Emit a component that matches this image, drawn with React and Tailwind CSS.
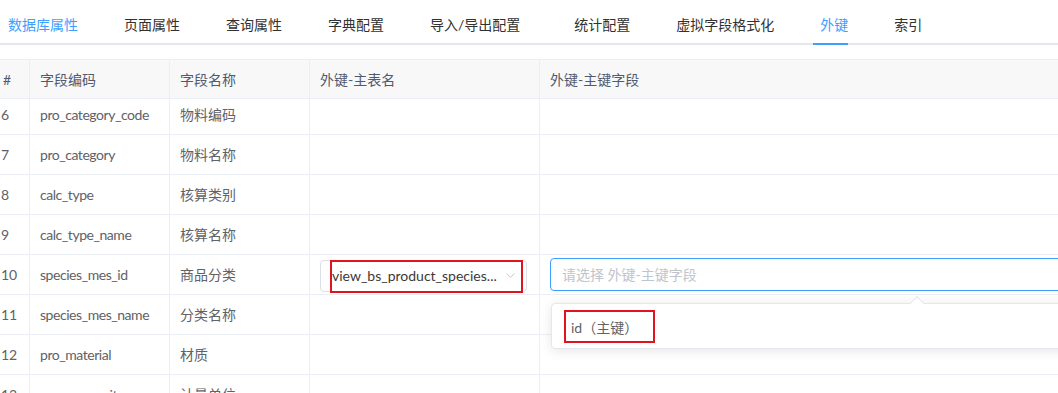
import React from "react";
import { ChevronDown } from "lucide-react";

const rows = [
  ["6", "pro_category_code", "物料编码"],
  ["7", "pro_category", "物料名称"],
  ["8", "calc_type", "核算类别"],
  ["9", "calc_type_name", "核算名称"],
  ["10", "species_mes_id", "商品分类", true],
  ["11", "species_mes_name", "分类名称"],
  ["12", "pro_material", "材质"],
  ["13", "measure_unit", "计量单位"],
];

const tabs = [
  { t: "数据库属性", c: "text-[#409eff]" },
  { t: "页面属性" },
  { t: "查询属性" },
  { t: "字典配置" },
  { t: "导入/导出配置" },
  { t: "统计配置", m: "ml-[8px]" },
  { t: "虚拟字段格式化" },
  { t: "外键", c: "text-[#409eff]", active: true },
  { t: "索引" },
];

export default function App() {
  return (
    <div
      className="w-[1058px] h-[393px] overflow-hidden bg-white relative text-[14px]"
      style={{ fontFamily: 'Lato, "Noto Sans CJK SC", sans-serif' }}
    >
      {/* tabs */}
      <div className="flex h-[45px] border-b-2 border-[#e4e7ed] pl-[8px] gap-[46px] items-center pt-[6px] text-[#303133]">
        {tabs.map((tab) => (
          <div key={tab.t} className={`relative h-full flex items-center whitespace-nowrap ${tab.c || ""} ${tab.m || ""}`}>
            {tab.t}
            {tab.active && (
              <div className="absolute left-[-7px] right-0 bottom-[-2px] h-[2px] bg-[#409eff]" />
            )}
          </div>
        ))}
      </div>

      {/* table */}
      <div className="mt-[14px] ml-[-10px] w-[1080px] border-t border-[#ebeef5]">
        <div className="grid grid-cols-[40px_140px_140px_230px_1fr] h-[39px] border-b border-[#ebeef5] bg-[#f8f8f9] text-[#515a6e]">
          <div className="pl-[13px] border-r border-[#ebeef5] flex items-center">#</div>
          <div className="pl-[10px] border-r border-[#ebeef5] flex items-center">字段编码</div>
          <div className="pl-[10px] border-r border-[#ebeef5] flex items-center">字段名称</div>
          <div className="pl-[10px] border-r border-[#ebeef5] flex items-center">外键-主表名</div>
          <div className="pl-[10px] flex items-center">外键-主键字段</div>
        </div>
        <div className="overflow-hidden h-[300px]">
          <div className="mt-[-4px]">
            {rows.map(([n, code, name, sel]) => (
              <div
                key={n}
                className="grid grid-cols-[40px_140px_140px_230px_1fr] h-[40px] border-b border-[#ebeef5] text-[#606266]"
              >
                <div className="pl-[11px] border-r border-[#ebeef5] flex items-center">{n}</div>
                <div className="pl-[10px] border-r border-[#ebeef5] flex items-center whitespace-nowrap tracking-[-0.45px]">{code}</div>
                <div className="pl-[10px] border-r border-[#ebeef5] flex items-center">{name}</div>
                <div className="px-[10px] border-r border-[#ebeef5] flex items-center relative">
                  {sel && (
                    <>
                      <div className="w-[207px] h-[32px] mt-[2px] border border-[#dcdfe6] rounded-[4px] flex items-center pl-[11px] pr-[8px] text-[#3a3a3a]">
                        <span className="flex-1 whitespace-nowrap overflow-hidden">view_bs_product_species...</span>
                        <ChevronDown size={15} strokeWidth={1.5} className="text-[#c0c4cc] ml-[6px] shrink-0" />
                      </div>
                      <div className="absolute left-[20px] top-[5px] w-[193px] h-[33px] border-2 border-[#e0141e]" />
                    </>
                  )}
                </div>
                <div className="pl-[10px] flex items-center relative">
                  {sel && (
                    <>
                      <div className="w-[600px] h-[33px] border border-[#409eff] rounded-[4px] flex items-center pl-[11px] text-[#c0c4cc] whitespace-nowrap">
                        请选择 外键-主键字段
                      </div>
                      <div className="absolute left-[11px] top-[48px] w-[600px] h-[46px] bg-white border border-[#e4e7ed] rounded-[4px] shadow-[0_2px_12px_rgba(0,0,0,0.1)] py-[6px] z-10">
                        <div className="absolute top-[-6px] left-[360px] w-[10px] h-[10px] bg-white border-l border-t border-[#e4e7ed] rotate-45" />
                        <div className="h-[34px] flex items-center pl-[19px] text-[#606266] relative whitespace-nowrap">
                          id（主键）
                          <div className="absolute left-[12px] top-0 w-[91px] h-[33px] border-2 border-[#e0141e]" />
                        </div>
                      </div>
                    </>
                  )}
                </div>
              </div>
            ))}
          </div>
        </div>
      </div>
    </div>
  );
}
